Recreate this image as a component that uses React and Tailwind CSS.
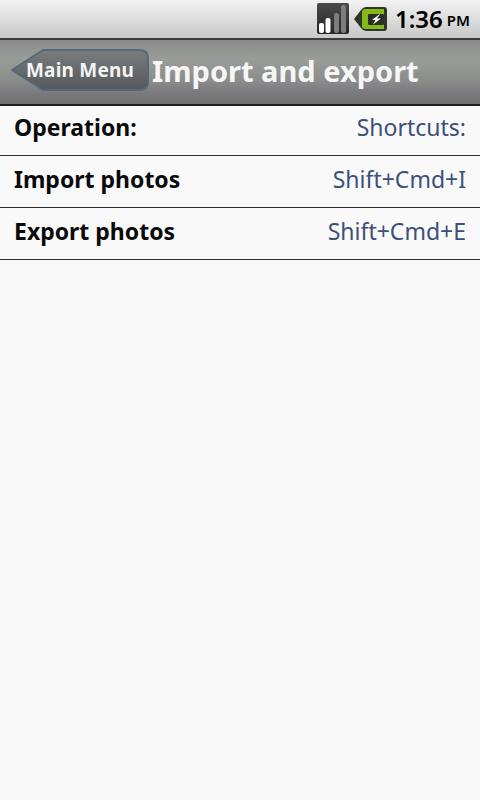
import React from 'react';

const font = { fontFamily: '"Noto Sans", "Open Sans", sans-serif' };

const rows = [
  { name: 'Operation:', keys: 'Shortcuts:' },
  { name: 'Import photos', keys: 'Shift+Cmd+I' },
  { name: 'Export photos', keys: 'Shift+Cmd+E' },
];

const SignalIcon = () => (
  <svg width="32" height="32" viewBox="0 0 32 32">
    <defs>
      <linearGradient id="signalBg" x1="0" y1="0" x2="0" y2="1">
        <stop offset="0" stopColor="#4a4a4a" />
        <stop offset="1" stopColor="#262626" />
      </linearGradient>
    </defs>
    <rect x="0" y="0" width="32" height="31" rx="2" fill="url(#signalBg)" />
    <rect x="2" y="20" width="5" height="10" rx="2" fill="#ffffff" />
    <rect x="8.5" y="15" width="5" height="15" rx="2" fill="#ffffff" />
    <rect x="17" y="10" width="5" height="20" rx="2" fill="#7d7d7d" />
    <rect x="24" y="2" width="5" height="28" rx="2" fill="#7d7d7d" />
  </svg>
);

const BatteryIcon = () => (
  <svg width="33" height="24" viewBox="0 0 33 24">
    <path d="M0 12 L7 3 Q9 0 12 0 L30 0 Q33 0 33 3 L33 21 Q33 24 30 24 L12 24 Q9 24 7 21 Z" fill="#2f352b" />
    <path d="M8 5 Q8 2 11 2 L30 2 L30 22 L11 22 Q8 22 8 19 Z" fill="#86b81c" />
    <rect x="14" y="7" width="16" height="11" rx="1" fill="#2b3024" />
    <path d="M25 7.5 L18 13 L21.5 13 L19 17.5 L27 11.5 L23 11.5 L26 7.5 Z" fill="#ffffff" />
  </svg>
);

const BackButton = () => (
  <div className="relative w-[140px] h-[44px] shrink-0 -mt-[4px]">
    <svg className="absolute inset-0" width="140" height="44" viewBox="0 0 140 44">
      <defs>
        <linearGradient id="backFill" x1="0" y1="0" x2="0" y2="1">
          <stop offset="0" stopColor="#7a7d7f" />
          <stop offset="1" stopColor="#55585a" />
        </linearGradient>
      </defs>
      <path
        d="M2 22 L33 2 L129 2 Q138 2 138 10 L138 34 Q138 42 129 42 L33 42 Z"
        fill="url(#backFill)"
        stroke="#56687a"
        strokeWidth="2"
        strokeLinejoin="round"
      />
    </svg>
    <span className="relative flex h-full items-center pl-[16px] text-[19px] font-bold text-[#f4f4f4] tracking-[0.2px]">
      Main Menu
    </span>
  </div>
);

export default function App() {
  return (
    <div className="w-[480px] h-[800px] flex flex-col bg-[#f9f9f9]" style={font}>
      <div className="h-[38px] flex items-center justify-end pr-[10px] bg-gradient-to-b from-[#f2f2f2] to-[#c8c8c8]">
        <SignalIcon />
        <div className="ml-[5px]">
          <BatteryIcon />
        </div>
        <span className="ml-[8px] text-[24px] font-semibold text-black leading-none">1:36</span>
        <span className="ml-[4px] mt-[3px] text-[15px] font-semibold text-black leading-none">PM</span>
      </div>
      <div className="h-[68px] flex items-center pl-[10px] border-t-2 border-b-2 border-t-[#3c3c3c] border-b-[#1c1c1c] bg-[linear-gradient(to_bottom,#8a8c8a_0%,#9a9c9a_30%,#8a8c8a_65%,#7e7d81_78%,#6f6f6f_100%)]">
        <BackButton />
        <h1 className="ml-[2px] -mt-[2px] text-[29px] font-bold text-[#f6f6f6] whitespace-nowrap">
          Import and export
        </h1>
      </div>
      {rows.map((row, i) => (
        <div
          key={row.name}
          className={
            i === 0
              ? 'h-[50px] flex items-center justify-between px-[14px] pb-[6px] border-b border-[#2b2b2b]'
              : 'h-[52px] flex items-center justify-between px-[14px] pb-[4px] border-b border-[#2b2b2b]'
          }
        >
          <span className="text-[23px] font-bold text-[#0a0a0a]">{row.name}</span>
          <span className="text-[23px] text-[#3b5078]">{row.keys}</span>
        </div>
      ))}
    </div>
  );
}
